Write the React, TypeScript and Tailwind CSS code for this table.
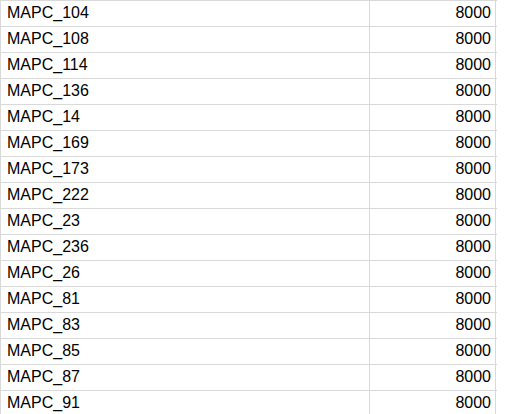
const rows = [
  "MAPC_104",
  "MAPC_108",
  "MAPC_114",
  "MAPC_136",
  "MAPC_14",
  "MAPC_169",
  "MAPC_173",
  "MAPC_222",
  "MAPC_23",
  "MAPC_236",
  "MAPC_26",
  "MAPC_81",
  "MAPC_83",
  "MAPC_85",
  "MAPC_87",
  "MAPC_91",
];

export default function App() {
  return (
    <div className="h-[414px] w-[512px] overflow-hidden bg-white font-['Liberation_Sans',Arial,sans-serif] text-[16px] text-black">
      <div className="w-[497px] border-t border-l border-[#d9d9d9]">
        {rows.map((name) => (
          <div key={name} className="flex h-[26px] border-b border-[#d9d9d9] leading-[23px]">
            <div className="w-[369px] shrink-0 border-r border-[#d9d9d9] pl-[6px]">{name}</div>
            <div className="w-[126px] shrink-0 border-r border-[#d9d9d9] pr-[4px] text-right">8000</div>
          </div>
        ))}
      </div>
    </div>
  );
}
